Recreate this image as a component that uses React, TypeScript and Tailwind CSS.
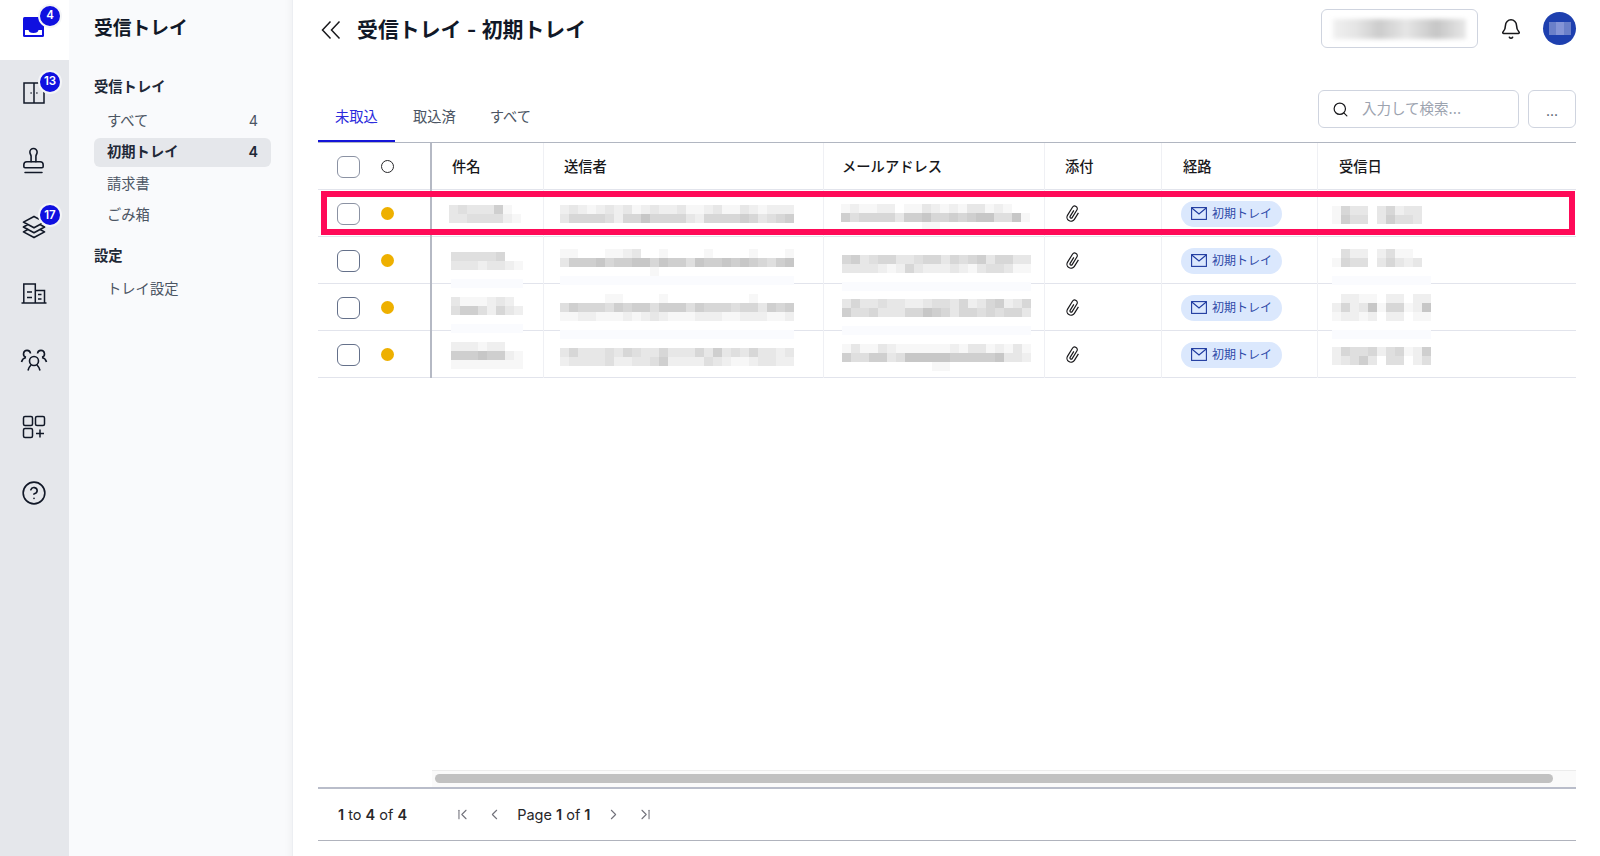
import { Bell, ChevronFirst, ChevronLast, ChevronLeft, ChevronRight, CircleHelp, Search, Stamp } from 'lucide-react';
import { HiOutlineSquare3Stack3D } from 'react-icons/hi2';

const colsClass = 'grid grid-cols-[114px_112px_280px_221px_117px_156px_1fr] grid-rows-[47px]';

// Pixelated (redacted) text: each char is one 9px cell, digit = darkness, p = pale patch
function Mosaic({ className, rows }: { className: string; rows: string[] }) {
  return (
    <div className={className}>
      {rows.map((row, r) => (
        <div key={r} className="flex h-[9px]">
          {row.split('').map((c, i) => {
            const bg = c === '.' ? 'transparent' : c === 'p' ? '#fafbfe' : `rgb(${255 - +c * 8},${255 - +c * 8},${255 - +c * 8})`;
            return <div key={i} className="w-[9px] h-[9px] shrink-0" style={{ background: bg }} />;
          })}
        </div>
      ))}
    </div>
  );
}

const mailRows = [
  {
    check: 'border-[#8b92a3]',
    subject: { c: 'ml-[17px] mt-[15px]', r: ['3433361.', '33444421'] },
    sender: {
      c: 'ml-[16px] mt-[15px]',
      r: ['23212323123223112311321222', '35555425575555325555653456'],
    },
    address: { c: 'ml-[17px] mt-[14px]', r: ['121122.113212133121..', '645555366755656774471', '.........11..........'] },
    date: { c: 'ml-[14px] mt-[16px]', r: ['1533.35233', '1644.36443'] },
  },
  {
    check: 'border-[#64708a]',
    subject: { c: 'ml-[19px] mt-[15px]', r: ['444445..', '33323321', '........', 'pppppppp'] },
    sender: {
      c: 'ml-[16px] mt-[12px]',
      r: ['11...1123..1....1....1...1', '36667566775766476676765467', '..........1...............', 'pppppppppppppppppppppppppp'],
    },
    address: { c: 'ml-[18px] mt-[18px]', r: ['563455334553545635533', '333321253222321344311', '.....................', 'ppppppppppppppppppppp'] },
    date: { c: 'ml-[14px] mt-[12px]', r: ['.422.2411.', '1544.35323', '...........', 'ppppppppppp'] },
  },
  {
    check: 'border-[#64708a]',
    subject: { c: 'ml-[19px] mt-[13px]', r: ['3111232.', '46642532', '........', 'pppppppp'] },
    sender: {
      c: 'ml-[16px] mt-[10px]',
      r: ['.....11....1.........1....', '46555465664666465554553656', '11221112123211122211222112', '..........................', 'pppppppppppppppppppppppppp'],
    },
    address: { c: 'ml-[18px] mt-[15px]', r: ['353343322344352356235', '644533355765355454553', '.....................', 'ppppppppppppppppppppp'] },
    date: { c: 'ml-[14px] mt-[10px]', r: ['.2211.22.22', '25237155127', '12212.22.11', '...........', 'ppppppppppp'] },
  },
  {
    check: 'border-[#64708a]',
    subject: { c: 'ml-[19px] mt-[11px]', r: ['222122..', '66676621', '11111111'] },
    sender: {
      c: 'ml-[16px] mt-[17px]',
      r: ['35333435433533353634353323', '23333422334622224321123322'],
    },
    address: { c: 'ml-[18px] mt-[13px]', r: ['131132111111213312131', '644663477777666667332', '..........11.........'] },
    date: { c: 'ml-[14px] mt-[16px]', r: ['25445245126', '23463.44.24'] },
  },
];

function Badge({ n }: { n: number }) {
  return (
    <span className="absolute left-[38px] top-[-18px] w-[24px] h-[24px] rounded-full bg-[#1010e0] border-2 border-[#f4f5f7] text-white text-[11.5px] font-semibold flex items-center justify-center">
      {n}
    </span>
  );
}

function RailItem({ badge, children }: { badge?: number; children: React.ReactNode }) {
  return (
    <div className="relative h-[66.7px] pr-[2px] flex items-center justify-center text-[#111827]">
      {children}
      {badge !== undefined && (
        <span className="absolute left-0 top-[28px]">
          <Badge n={badge} />
        </span>
      )}
    </div>
  );
}

function Rail() {
  return (
    <div className="w-[69px] shrink-0 bg-[#e5e7eb] flex flex-col">
      <div className="relative h-[60px] bg-white flex items-start justify-center pr-[2px] pt-[17px]">
        <svg width="21" height="20" viewBox="0 0 21 20">
          <rect width="21" height="20" rx="1.5" fill="#1010e0" />
          <path d="M2 13h3.5c.3 2 1.8 3 5 3s4.700-1 5-3H19v5H2z" fill="#fff" />
        </svg>
        <span className="absolute left-0 top-[22px]">
          <Badge n={4} />
        </span>
      </div>
      <RailItem badge={13}>
        <svg width="24" height="24" viewBox="0 0 24 24" fill="none" stroke="currentColor" strokeWidth="1.5">
          <rect x="2" y="2" width="20" height="20" />
          <path d="M12 2v20" />
          <path d="M8.500 12h1.200M14.300 12h1.200" />
        </svg>
      </RailItem>
      <RailItem>
        <Stamp size={29} strokeWidth={1.3} />
      </RailItem>
      <RailItem badge={17}>
        <HiOutlineSquare3Stack3D size={26} />
      </RailItem>
      <RailItem>
        <svg width="26" height="21" viewBox="0 0 26 21" fill="none" stroke="currentColor" strokeWidth="1.5">
          <path d="M0.500 20h25" />
          <path d="M2.800 20V1h11.500v19" />
          <path d="M14.300 7.500h9.200V20" />
          <path d="M6 9h5M6 14.500h5M17 11.500h3.500M17 16h3.500" />
        </svg>
      </RailItem>
      <RailItem>
        <svg width="28" height="24" viewBox="0 0 28 24" fill="none" stroke="currentColor" strokeWidth="1.600">
          <circle cx="14" cy="13" r="4.500" />
          <path d="M8 22.500c.5-3 2-4.500 3-5.500M20 22.500c-.5-3-2-4.500-3-5.500" />
          <path d="M6 9.200A3.500 3.500 0 1 1 10.500 5.500M6 9.500c-2 .5-4 2.500-4.500 4.500" />
          <path d="M22 9.200A3.500 3.500 0 1 0 17.500 5.500M22 9.500c2 .5 4 2.500 4.500 4.500" />
        </svg>
      </RailItem>
      <RailItem>
        <svg width="24" height="24" viewBox="0 0 24 24" fill="none" stroke="currentColor" strokeWidth="1.5">
          <rect x="1.500" y="1.500" width="9" height="9" rx="1.500" />
          <rect x="13.500" y="1.500" width="9" height="9" rx="1.500" />
          <rect x="1.500" y="13.500" width="9" height="9" rx="1.500" />
          <path d="M18 14.500v8M14 18.500h8" />
        </svg>
      </RailItem>
      <RailItem>
        <CircleHelp size={26} strokeWidth={1.5} />
      </RailItem>
    </div>
  );
}

function NavItem({ label, count, active }: { label: string; count?: number; active?: boolean }) {
  return (
    <div
      className={`h-[29px] mb-[2.5px] rounded-md pl-[13px] pr-[13px] flex items-center justify-between text-[14.3px] ${
        active ? 'bg-[#e5e7eb] font-semibold text-[#1f2937]' : 'text-[#4b5563]'
      }`}
    >
      <span>{label}</span>
      {count !== undefined && <span>{count}</span>}
    </div>
  );
}

function Panel() {
  return (
    <div className="w-[224px] shrink-0 bg-[#f9fafc] border-r border-[#eceef2] shadow-[inset_-10px_0_10px_-10px_rgba(0,0,0,0.06)] pl-[25px] pr-[21px]">
      <div className="h-[59px] flex items-center text-[18.8px] font-semibold text-[#111827]">受信トレイ</div>
      <div className="h-[20px] mt-[18px] flex items-center text-[14.3px] font-semibold text-[#1f2937]">受信トレイ</div>
      <div className="mt-[9px]">
        <NavItem label="すべて" count={4} />
        <NavItem label="初期トレイ" count={4} active />
        <NavItem label="請求書" />
        <NavItem label="ごみ箱" />
      </div>
      <div className="h-[20px] mt-[16px] flex items-center text-[14.3px] font-semibold text-[#1f2937]">設定</div>
      <div className="mt-[9px]">
        <NavItem label="トレイ設定" />
      </div>
    </div>
  );
}

function Clip() {
  return (
    <svg width="18" height="18" viewBox="0 0 18 18" fill="none" stroke="#18181b" strokeWidth="1.2" className="ml-[19px]">
      <g transform="rotate(32 9 9)">
        <path d="M7.800 5.500v7a1.200 1.200 0 0 0 2.400 0V3.600a2.600 2.600 0 0 0-5.200 0v9.200a4 4 0 0 0 8 0V5.200" />
      </g>
    </svg>
  );
}

function Chip() {
  return (
    <div className="ml-[19px] w-[101px] h-[26px] rounded-full bg-[#dbe8fd] flex items-center pl-[10px] gap-[5px] text-xs text-[#2f4aa8]">
      <svg width="16" height="13" viewBox="0 0 16 13" fill="none" stroke="#1e3a9f" strokeWidth="1.100">
        <rect x="0.600" y="0.600" width="14.800" height="11.800" />
        <path d="M0.800 1l7.200 6 7.200-6" />
      </svg>
      <span>初期トレイ</span>
    </div>
  );
}

const headCols = [
  { label: '件名', cls: 'pl-[20px] border-r border-[#eff0f4]' },
  { label: '送信者', cls: 'pl-[20px] border-r border-[#eff0f4]' },
  { label: 'メールアドレス', cls: 'pl-[18px] border-r border-[#eff0f4]' },
  { label: '添付', cls: 'pl-[20px] border-r border-[#eff0f4]' },
  { label: '経路', cls: 'pl-[21px] border-r border-[#eff0f4]' },
  { label: '受信日', cls: 'pl-[21px]' },
];

function Table() {
  return (
    <div className="flex-1 border-t border-[#b1b6c1]">
      <div className={`${colsClass} h-[47px] border-b border-[#e2e4ec]`}>
        <div className="flex items-center pl-[19px] border-r-2 border-[#b5b9c4]">
          <div className="w-[23px] h-[22px] rounded-[6px] border border-[#8b92a3]" />
          <div className="ml-[21px] w-[13px] h-[13px] rounded-full border border-[#27272a]" />
        </div>
        {headCols.map((h) => (
          <div key={h.label} className={`flex items-center text-[14.3px] font-medium text-[#18181b] ${h.cls}`}>
            {h.label}
          </div>
        ))}
      </div>
      {mailRows.map((row, i) => (
        <div key={i} className={`${colsClass} relative h-[47px] border-b border-[#e2e4ec]`}>
          <div className="flex items-center pl-[19px] border-r-2 border-[#b5b9c4]">
            <div className={`w-[23px] h-[22px] rounded-[6px] border ${row.check}`} />
            <div className="ml-[21px] w-[13px] h-[13px] rounded-full bg-[#eeb000]" />
          </div>
          <div className="border-r border-[#eff0f4]">
            <Mosaic className={row.subject.c} rows={row.subject.r} />
          </div>
          <div className="border-r border-[#eff0f4]">
            <Mosaic className={row.sender.c} rows={row.sender.r} />
          </div>
          <div className="border-r border-[#eff0f4]">
            <Mosaic className={row.address.c} rows={row.address.r} />
          </div>
          <div className="flex items-center border-r border-[#eff0f4]">
            <Clip />
          </div>
          <div className="flex items-center border-r border-[#eff0f4]">
            <Chip />
          </div>
          <div>
            <Mosaic className={row.date.c} rows={row.date.r} />
          </div>
          {i === 0 && <div className="absolute left-[3px] right-[1px] top-[1px] h-[44px] border-[6px] border-[#ff0a58]" />}
        </div>
      ))}
    </div>
  );
}

export default function App() {
  return (
    <div className="flex w-full h-screen overflow-hidden bg-white font-['Inter','Noto_Sans_CJK_JP',sans-serif]">
      <Rail />
      <Panel />
      <main className="flex-1 min-w-0 flex flex-col pl-[25px] pr-[24px]">
        {/* Header */}
        <div className="h-[90px] pt-[9px] flex items-start">
          <div className="h-[41px] flex items-center">
            <svg width="20" height="20" viewBox="0 0 20 20" fill="none" stroke="#18181b" strokeWidth="1.5" className="ml-[3px]">
              <path d="M9.500 1.500L1.500 10l8 8.500M18.500 1.500l-8 8.500 8 8.500" />
            </svg>
            <h1 className="ml-[16px] text-[20.9px] font-semibold text-[#111827]">受信トレイ - 初期トレイ</h1>
          </div>
          <div className="ml-auto h-[39px] w-[157px] rounded-md border border-[#cfd4df] flex items-center justify-center">
            <div className="w-[133px] h-[20px] blur-[2px] bg-[linear-gradient(90deg,#f0f0f0_0%,#e4e4e4_18%,#cccccc_35%,#e6e6e6_55%,#c6c6c6_78%,#e8e8e8_100%)]" />
          </div>
          <div className="h-[39px] ml-[22px] flex items-center">
            <Bell size={22} strokeWidth={1.7} className="text-[#18181b]" />
          </div>
          <div className="ml-[21px] mt-[3px] w-[33px] h-[33px] rounded-full bg-[#1e40af] flex items-center justify-center">
            <div className="flex">
              <div className="w-[7px] h-[13px] bg-[#6a7fc9]" />
              <div className="w-[8px] h-[13px] bg-[#8494d6]" />
              <div className="w-[7px] h-[13px] bg-[#6a7fc9]" />
            </div>
          </div>
        </div>

        {/* Tabs and search */}
        <div className="h-[52px] flex items-start justify-between">
          <div className="flex h-[52px] text-[14.3px]">
            <div className="px-[17px] pt-[16px] border-b-2 border-[#1414d8] text-[#2b2bdc]">未取込</div>
            <div className="px-[18px] pt-[16px] text-[#4b5563]">取込済</div>
            <div className="pl-[16px] pr-[18px] pt-[16px] text-[#4b5563]">すべて</div>
          </div>
          <div className="flex gap-[9px]">
            <div className="w-[201px] h-[38px] rounded-md border border-[#cfd4df] flex items-center pl-[13px] gap-[13px]">
              <Search size={17} strokeWidth={1.7} className="text-[#18181b]" />
              <span className="text-[14.500px] text-[#9ca3af]">入力して検索...</span>
            </div>
            <div className="w-[48px] h-[38px] rounded-md border border-[#cfd4df] flex items-center justify-center pt-[4px] text-sm text-[#4b5563]">
              ...
            </div>
          </div>
        </div>

        <Table />

        {/* Horizontal scrollbar */}
        <div className="ml-[114px] h-[17px] bg-[#fafafa] border-t border-[#ececec] pl-[3px] pr-[23px] pt-[3px]">
          <div className="h-[9px] rounded-full bg-[#c1c1c1]" />
        </div>

        {/* Pager */}
        <div className="h-[54px] border-t-2 border-b border-t-[#b9bdca] border-b-[#b0b3bd] flex items-center pl-[20px] text-[14.500px] text-[#27272a]">
          <span>
            <b className="font-semibold">1</b> to <b className="font-semibold">4</b> of <b className="font-semibold">4</b>
          </span>
          <ChevronFirst size={17} strokeWidth={1.5} className="ml-[47px] text-[#71717a]" />
          <ChevronLeft size={17} strokeWidth={1.5} className="ml-[15px] text-[#71717a]" />
          <span className="ml-[14px]">
            Page <b className="font-semibold">1</b> of <b className="font-semibold">1</b>
          </span>
          <ChevronRight size={17} strokeWidth={1.5} className="ml-[15px] text-[#71717a]" />
          <ChevronLast size={17} strokeWidth={1.5} className="ml-[15px] text-[#71717a]" />
        </div>
        <div className="h-[15px]" />
      </main>
    </div>
  );
}
